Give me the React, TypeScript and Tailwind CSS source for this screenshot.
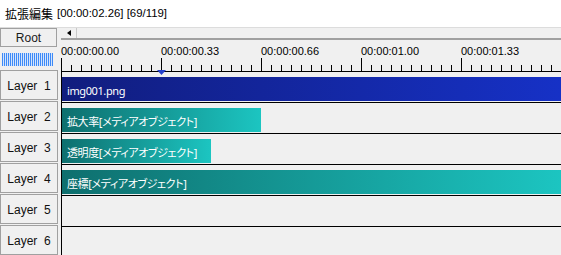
const layers = [
  { name: "Layer  1", label: "img001.png", width: 499, kind: "blue" },
  { name: "Layer  2", label: "拡大率[メディアオブジェクト]", width: 199, kind: "teal" },
  { name: "Layer  3", label: "透明度[メディアオブジェクト]", width: 149, kind: "teal" },
  { name: "Layer  4", label: "座標[メディアオブジェクト]", width: 499, kind: "teal" },
  { name: "Layer  5", label: null, width: 0, kind: "" },
  { name: "Layer  6", label: null, width: 0, kind: "" },
];

const marks = ["00:00:00.00", "00:00:00.33", "00:00:00.66", "00:00:01.00", "00:00:01.33"];

const ui = "font-['Liberation_Sans','Noto_Sans_CJK_JP',sans-serif]";
const jp = "font-['Noto_Sans','Noto_Sans_CJK_JP',sans-serif] [font-feature-settings:'palt']";

function Ticks() {
  const ticks = [];
  for (let i = 0; i <= 50; i++) {
    const x = i * 10 + 0.5;
    const major = i % 10 === 0;
    ticks.push(<line key={i} x1={x} x2={x} y1={major ? 0 : 7} y2={13} stroke="#000" strokeWidth={1} />);
  }
  return (
    <svg width={500} height={13} className="block">
      {ticks}
    </svg>
  );
}

export default function App() {
  return (
    <div className={`w-[561px] h-[255px] overflow-hidden bg-[#f0f0f0] text-black ${ui}`}>
      {/* title */}
      <div className="h-[28px] bg-white border-b border-[#dcdcdc] flex items-center pl-[5px] text-[11.4px]">
        <span className="text-[12px] font-['Noto_Sans_CJK_JP',sans-serif]">拡張編集</span>
        <span className="ml-[4px]">[00:00:02.26] [69/119]</span>
      </div>

      {/* header row */}
      <div className="flex h-[43px]">
        <div className="w-[61px] shrink-0">
          <div className="w-[57px] h-[19px] border border-[#a0a0a0] bg-[#f0f0f0] flex items-center justify-center text-[12px] text-[#1a1a1a]">
            Root
          </div>
          <div className="ml-[2px] mt-[6px] w-[51px] h-[13px] bg-[repeating-linear-gradient(90deg,#3d8af7_0px,#3d8af7_1px,#d4e4fb_1px,#d4e4fb_2px)]" />
        </div>
        <div className="flex-1 relative">
          <div className="h-[12px] flex bg-[#f0f0f0] border-b-2 border-b-[#a0a0a0]">
            <div className="w-[16px] border-r border-[#c8c8c8] flex items-center justify-center">
              <svg width={4} height={6}>
                <polygon points="4,0 4,6 0,3" fill="#000" />
              </svg>
            </div>
          </div>
          <div className="h-[31px] flex flex-col">
            <div className="flex pt-[5px] h-[18px]">
              {marks.map((m) => (
                <span key={m} className="w-[100px] shrink-0 text-[11px] leading-[12px] text-[#000]">
                  {m}
                </span>
              ))}
            </div>
            <Ticks />
          </div>
          <svg width={9} height={5} className="absolute left-[96px] top-[42px] z-10">
            <polygon points="0,0 9,0 4.5,5" fill="#2440cc" />
          </svg>
        </div>
      </div>

      {/* layers */}
      {layers.map((l) => (
        <div key={l.name} className="flex h-[31px]">
          <div className="w-[61px] shrink-0">
            <div className="w-[58px] h-[30px] -mt-px border border-[#a0a0a0] bg-[#f0f0f0] flex items-center justify-center pt-[2px] text-[12px] text-[#111] whitespace-pre">
              {l.name}
            </div>
          </div>
          <div className="flex-1 border-t border-black border-l pt-[5px]">
            {l.label && (
              <div
                className={`h-[24px] pl-[5px] pt-[3px] text-white text-[11px] leading-[21px] tracking-[-0.4px] whitespace-nowrap ${jp} ${
                  l.kind === "blue"
                    ? "bg-[linear-gradient(90deg,#111d7e,#1631c6)]"
                    : "bg-[linear-gradient(90deg,#0e6f6e,#1cc5c1)]"
                }`}
                style={{ width: l.width }}
              >
                {l.label}
              </div>
            )}
          </div>
        </div>
      ))}
    </div>
  );
}
